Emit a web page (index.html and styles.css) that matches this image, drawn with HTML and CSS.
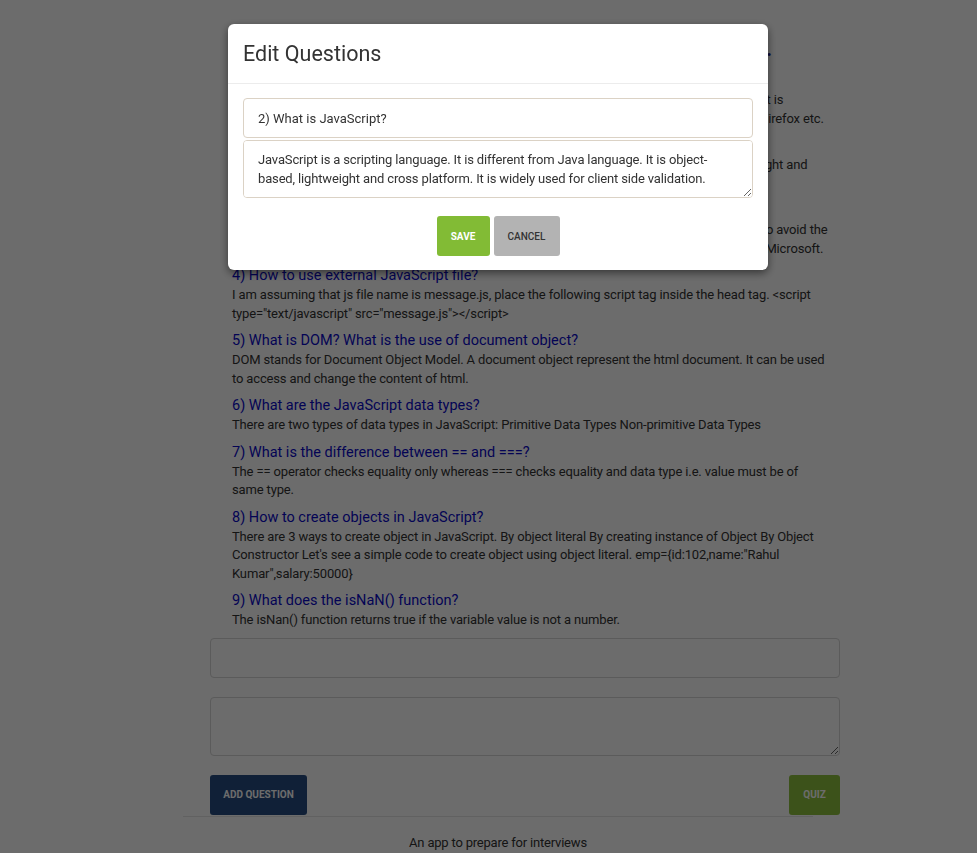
FILE: index.html
```html
<!DOCTYPE html>
<html lang="en">
<head>
<meta charset="utf-8">
<title>Interview Questions</title>
<link rel="stylesheet" href="styles.css">
</head>
<body>
<div class="page">
  <h1 class="title">JavaScript Interview Questions.</h1>
  <div class="qa-list">
    <div class="qa">
      <h4>1) Where does JavaScript run?</h4>
      <p>JavaScript is a lightweight, interpreted scripting language that is executed by the web browser. It is supported by all the major browsers like Google Chrome, Internet Explorer, Opera, Safari, Edge, Firefox etc.</p>
    </div>
    <div class="qa">
      <h4>2) What is JavaScript?</h4>
      <p>JavaScript is a scripting language. It is different from Java language. It is object-based, lightweight and cross platform. It is widely used for client side validation.</p>
    </div>
    <div class="qa">
      <h4>3) What is the difference between JavaScript and JScript?</h4>
      <p>Netscape provided the JavaScript language. Microsoft changed the name and called it JScript to avoid the trademark issue.In other words, you can say JScript is same as JavaScript, but it is provided by Microsoft.</p>
    </div>
    <div class="qa">
      <h4>4) How to use external JavaScript file?</h4>
      <p>I am assuming that js file name is message.js, place the following script tag inside the head tag. &lt;script type="text/javascript" src="message.js"&gt;&lt;/script&gt;</p>
    </div>
    <div class="qa">
      <h4>5) What is DOM? What is the use of document object?</h4>
      <p>DOM stands for Document Object Model. A document object represent the html document. It can be used to access and change the content of html.</p>
    </div>
    <div class="qa">
      <h4>6) What are the JavaScript data types?</h4>
      <p>There are two types of data types in JavaScript: Primitive Data Types Non-primitive Data Types</p>
    </div>
    <div class="qa">
      <h4>7) What is the difference between == and ===?</h4>
      <p>The == operator checks equality only whereas === checks equality and data type i.e. value must be of same type.</p>
    </div>
    <div class="qa">
      <h4>8) How to create objects in JavaScript?</h4>
      <p>There are 3 ways to create object in JavaScript. By object literal By creating instance of Object By Object Constructor Let's see a simple code to create object using object literal. emp={id:102,name:"Rahul Kumar",salary:50000}</p>
    </div>
    <div class="qa">
      <h4>9) What does the isNaN() function?</h4>
      <p>The isNan() function returns true if the variable value is not a number.</p>
    </div>
  </div>
  <input class="field" type="text">
  <textarea class="field area"></textarea>
  <div class="actions">
    <button class="btn btn-navy">ADD QUESTION</button>
    <button class="btn btn-green">QUIZ</button>
  </div>
</div>
<footer class="footer">
  <hr class="rule">
  <p class="footer-text">An app to prepare for interviews</p>
</footer>

<div class="backdrop"></div>
<div class="modal-wrap">
  <div class="modal">
    <div class="modal-header">
      <h2 class="modal-title">Edit Questions</h2>
    </div>
    <div class="modal-body">
      <input class="m-field" type="text" value="2) What is JavaScript?">
      <textarea class="m-field m-area">JavaScript is a scripting language. It is different from Java language. It is object-based, lightweight and cross platform. It is widely used for client side validation.</textarea>
      <div class="m-actions">
        <button class="btn btn-save">SAVE</button>
        <button class="btn btn-cancel">CANCEL</button>
      </div>
    </div>
  </div>
</div>
</body>
</html>
```
FILE: styles.css
```css
* { box-sizing: border-box; }

html, body {
  margin: 0;
  padding: 0;
  background: #fff;
  font-family: Roboto, "Liberation Sans", Arial, sans-serif;
  color: #333;
  overflow: hidden;
}

.page {
  width: 630px;
  margin-left: 210px;
  padding-top: 30px;
}

.title {
  margin: 0;
  padding-right: 67px;
  font-size: 28px;
  line-height: 34px;
  font-weight: 400;
  color: #1a1a8c;
  text-align: right;
}

.qa-list {
  padding-left: 22px;
  padding-right: 12px;
  margin-top: 7px;
}

.qa { margin-bottom: 8px; }

.qa h4 {
  margin: 0;
  font-size: 14.5px;
  line-height: 20px;
  font-weight: 400;
  color: #0a0ac8;
}

.qa p {
  margin: 0;
  font-size: 13px;
  line-height: 18.5px;
  letter-spacing: -0.15px;
  color: #333;
}

.field {
  display: block;
  width: 630px;
  height: 40px;
  margin-top: 8px;
  border: 1px solid #d6d6d6;
  border-radius: 4px;
  background: #fff;
  font-family: inherit;
}

.area {
  height: 59px;
  margin-top: 19px;
}

.actions {
  display: flex;
  justify-content: space-between;
  margin-top: 19px;
}

.btn {
  border: 0;
  border-radius: 3px;
  height: 40px;
  padding: 0 14px;
  font-family: Roboto, "Liberation Sans", Arial, sans-serif;
  font-size: 10px;
  font-weight: 700;
  color: #fff;
}

.btn-navy { background: #264d82; width: 97px; padding: 0; }
.btn-green { background: #8fc23f; width: 51px; padding: 0; }

.footer {
  width: 630px;
  margin-left: 183px;
}

.rule {
  margin: 1px 0 0;
  border: 0;
  border-top: 1px solid #e6e6e6;
}

.footer-text {
  margin: 17px 0 0;
  text-align: center;
  font-size: 13px;
  line-height: 18px;
  letter-spacing: -0.2px;
  color: #333;
}

.backdrop {
  position: fixed;
  inset: 0;
  background: rgba(0, 0, 0, 0.576);
}

.modal-wrap {
  position: fixed;
  inset: 0;
  padding-top: 24px;
  padding-left: 228px;
}

.modal {
  width: 540px;
  background: #fff;
  border-radius: 6px;
  box-shadow: 0 3px 9px rgba(0, 0, 0, 0.5);
}

.modal-header {
  padding: 15px 15px;
  border-bottom: 1px solid #ececec;
}

.modal-title {
  margin: 0;
  font-size: 21.5px;
  line-height: 29px;
  font-weight: 400;
  color: #333;
}

.modal-body {
  padding: 14px 15px 14px;
}

.m-field {
  display: block;
  width: 510px;
  height: 40px;
  padding: 0 14px;
  border: 1px solid #dbd2c5;
  border-radius: 4px;
  font-family: Roboto, "Liberation Sans", Arial, sans-serif;
  font-size: 13px;
  color: #333;
  background: #fff;
}

.m-area {
  height: 58px;
  margin-top: 2px;
  padding: 10px 14px;
  line-height: 18.5px;
  letter-spacing: -0.15px;
  resize: vertical;
}

.m-actions {
  display: flex;
  justify-content: center;
  gap: 4px;
  margin-top: 18px;
}

.btn-save { background: #82bb35; width: 53px; padding: 0; }
.btn-cancel { background: #b3b3b3; color: #333; width: 66px; padding: 0; font-weight: 500; }
```
